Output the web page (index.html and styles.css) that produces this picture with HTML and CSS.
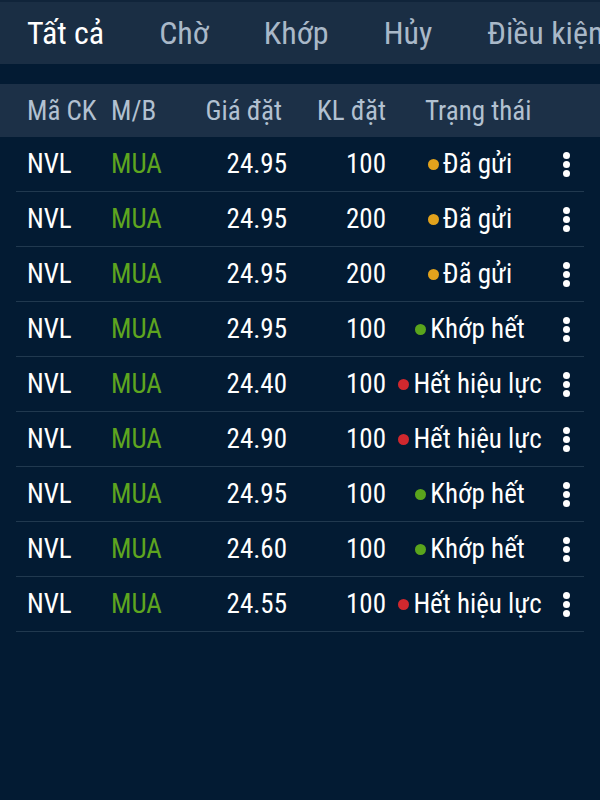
FILE: index.html
```html
<!DOCTYPE html>
<html lang="vi">
<head>
    <meta charset="UTF-8">
    <meta name="viewport" content="width=device-width, initial-scale=1.0">
    <title>Sổ lệnh</title>
    <link rel="stylesheet" href="styles.css">
</head>
<body>

    <!-- Onglets -->
    <div class="tabs">
        <div class="tab active">Tất cả</div>
        <div class="tab">Chờ</div>
        <div class="tab">Khớp</div>
        <div class="tab">Hủy</div>
        <div class="tab">Điều kiện</div>
    </div>

    <div class="head-row">
        <div class="c-code">Mã CK</div>
        <div class="c-side">M/B</div>
        <div class="c-price">Giá đặt</div>
        <div class="c-qty">KL đặt</div>
        <div class="c-status">Trạng thái</div>
        <div></div>
    </div>

    <div class="orders">
        <div class="row">
            <div class="c-code">NVL</div>
            <div class="c-side buy">MUA</div>
            <div class="c-price">24.95</div>
            <div class="c-qty">100</div>
            <div class="c-status"><span class="dot sent"></span>Đã gửi</div>
            <div class="more"><i></i><i></i><i></i></div>
        </div>
        <div class="row">
            <div class="c-code">NVL</div>
            <div class="c-side buy">MUA</div>
            <div class="c-price">24.95</div>
            <div class="c-qty">200</div>
            <div class="c-status"><span class="dot sent"></span>Đã gửi</div>
            <div class="more"><i></i><i></i><i></i></div>
        </div>
        <div class="row">
            <div class="c-code">NVL</div>
            <div class="c-side buy">MUA</div>
            <div class="c-price">24.95</div>
            <div class="c-qty">200</div>
            <div class="c-status"><span class="dot sent"></span>Đã gửi</div>
            <div class="more"><i></i><i></i><i></i></div>
        </div>
        <div class="row">
            <div class="c-code">NVL</div>
            <div class="c-side buy">MUA</div>
            <div class="c-price">24.95</div>
            <div class="c-qty">100</div>
            <div class="c-status"><span class="dot done"></span>Khớp hết</div>
            <div class="more"><i></i><i></i><i></i></div>
        </div>
        <div class="row">
            <div class="c-code">NVL</div>
            <div class="c-side buy">MUA</div>
            <div class="c-price">24.40</div>
            <div class="c-qty">100</div>
            <div class="c-status"><span class="dot expired"></span>Hết hiệu lực</div>
            <div class="more"><i></i><i></i><i></i></div>
        </div>
        <div class="row">
            <div class="c-code">NVL</div>
            <div class="c-side buy">MUA</div>
            <div class="c-price">24.90</div>
            <div class="c-qty">100</div>
            <div class="c-status"><span class="dot expired"></span>Hết hiệu lực</div>
            <div class="more"><i></i><i></i><i></i></div>
        </div>
        <div class="row">
            <div class="c-code">NVL</div>
            <div class="c-side buy">MUA</div>
            <div class="c-price">24.95</div>
            <div class="c-qty">100</div>
            <div class="c-status"><span class="dot done"></span>Khớp hết</div>
            <div class="more"><i></i><i></i><i></i></div>
        </div>
        <div class="row">
            <div class="c-code">NVL</div>
            <div class="c-side buy">MUA</div>
            <div class="c-price">24.60</div>
            <div class="c-qty">100</div>
            <div class="c-status"><span class="dot done"></span>Khớp hết</div>
            <div class="more"><i></i><i></i><i></i></div>
        </div>
        <div class="row">
            <div class="c-code">NVL</div>
            <div class="c-side buy">MUA</div>
            <div class="c-price">24.55</div>
            <div class="c-qty">100</div>
            <div class="c-status"><span class="dot expired"></span>Hết hiệu lực</div>
            <div class="more"><i></i><i></i><i></i></div>
        </div>
    </div>

</body>
</html>
```

FILE: styles.css
```css
body {
    font-family: Roboto, "Liberation Sans", sans-serif;
    font-stretch: condensed;
    background-color: #031b33;
    color: #fff;
    margin: 0;
    height: 800px;
    overflow: hidden;
}

/* Onglets */
.tabs {
    display: flex;
    height: 62px;
    align-items: center;
    padding-left: 27px;
    gap: 55px;
    background-color: #1a2e44;
    border-top: 2px solid #10243a;
    white-space: nowrap;
    overflow: hidden;
}

.tab {
    font-size: 32px;
    color: #a9b8c8;
}

.tab.active {
    color: #fff;
}

/* Colonnes communes */
.head-row, .row {
    display: grid;
    grid-template-columns: 84px 89px 87px 99px 168px 24px;
    align-items: center;
    font-size: 27px;
}

.head-row {
    margin-top: 20px;
    height: 53px;
    padding: 0 16px 0 27px;
    background-color: #1c3047;
    color: #b2c1d1;
}

.head-row .c-price {
    text-align: right;
    padding-right: 5px;
}

.head-row .c-qty {
    text-align: right;
}

.head-row .c-status {
    padding-left: 39px;
}

.orders {
    padding: 0 16px;
}

.row {
    height: 54px;
    padding-left: 11px;
    border-bottom: 1px solid #21394f;
}

.c-price, .c-qty {
    text-align: right;
}

.buy {
    color: #5ea51f;
}

.c-status {
    display: flex;
    align-items: center;
    justify-content: center;
    gap: 4px;
    white-space: nowrap;
}

.head-row .c-status {
    justify-content: flex-start;
}

.dot {
    width: 11px;
    height: 11px;
    border-radius: 50%;
}

.dot.sent {
    background-color: #e2a21c;
}

.dot.done {
    background-color: #5aa51c;
}

.dot.expired {
    background-color: #d0282e;
}

.more {
    display: flex;
    flex-direction: column;
    align-items: center;
    gap: 2px;
}

.more i {
    width: 7px;
    height: 7px;
    border-radius: 50%;
    background-color: #fff;
}
```
